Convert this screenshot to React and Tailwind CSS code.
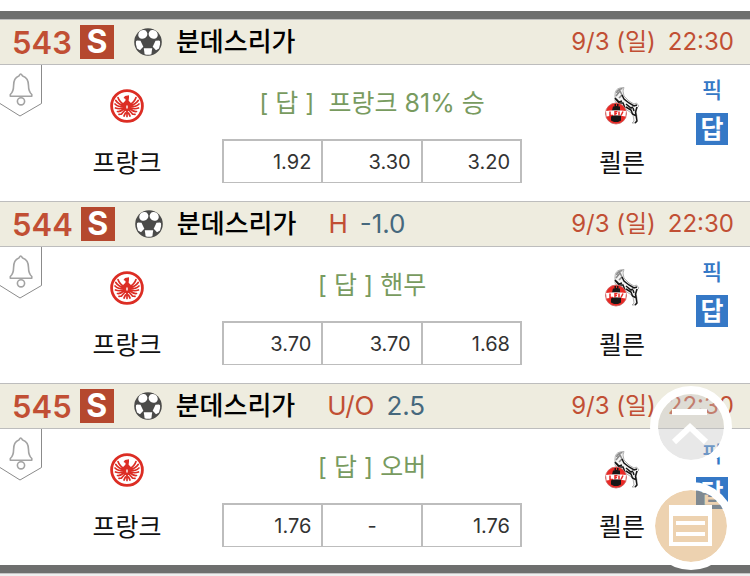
const matches = [
  { id: 543, answer: "[ 답 ]\u00a0 프랑크 81% 승", odds: ["1.92", "3.30", "3.20"] },
  {
    id: 544,
    mark: "H",
    line: "-1.0",
    answer: "[ 답 ] 핸무",
    odds: ["3.70", "3.70", "1.68"],
  },
  {
    id: 545,
    mark: "U/O",
    line: "2.5",
    answer: "[ 답 ] 오버",
    odds: ["1.76", "-", "1.76"],
  },
];

function SoccerBall() {
  return (
    <svg className="ml-5 size-7 shrink-0" viewBox="0 0 28 28" aria-hidden="true">
      <circle cx="14" cy="14" r="13.8" fill="#4b4b4a" />
      <g fill="#fff">
        <ellipse cx="8.8" cy="6.4" rx="4.7" ry="4.2" transform="rotate(-32 8.8 6.4)" />
        <ellipse cx="19.2" cy="6.4" rx="4.7" ry="4.2" transform="rotate(32 19.2 6.4)" />
        <path d="M3 12.5 6.500 12.800 9.300 18.800 6 22.200 3 20.500Q1.200 16 2 13.200Z" />
        <path d="M25 12.500l-3.500.3-2.800 6 3.300 3.400 3-1.700q1.800-4.500 1-7.300Z" />
        <path d="M9.800 20.200h8.400l-.8 6q-3.400 1-6.800 0Z" />
      </g>
      <path d="m14 8.600 5.600 4.200-2.100 6.400h-7l-2.100-6.400Z" fill="#4b4b4a" />
    </svg>
  );
}

function FrankfurtLogo() {
  return (
    <svg className="size-[34px]" viewBox="0 0 34 34" role="img" aria-label="프랑크">
      <circle cx="17" cy="17" r="15.400" fill="#fff" stroke="#dc2d24" strokeWidth="2.800" />
      <g fill="none" stroke="#dc2d24" strokeWidth="1.700" strokeLinecap="round">
        <path d="M15 16Q9.500 13.500 8 8.500M14 17Q8 15 5.800 11.500M14 18Q8 18 5 15M14 19Q9 20.500 5.500 19M14 20Q10 23 7.500 22.500" />
        <path d="M19 16Q24.500 13.500 26 8.500M20 17Q26 15 28.200 11.500M20 18Q26 18 29 15M20 19Q25 20.500 28.500 19M20 20Q24 23 26.500 22.500" />
        <path d="M15 21l-3.500 4M11.500 25l-2.500.3M19 21l3.500 4M22.500 25l2.500.3M17 20v7.500M15.500 24l-1.500 3M18.500 24l1.500 3" />
      </g>
      <path d="M17 11c2 1 4.500 2.500 4.500 5.500S19 22 17 23c-2-1-4.500-3.500-4.500-6.500S15 12 17 11Z" fill="#dc2d24" />
      <path d="M15 7l4-.8v2.500l-.5 3.500h-3V10l-2-1Z" fill="#dc2d24" />
      <path d="M16 16.500h2v3h-2Z" fill="#fff" fillOpacity=".7" />
    </svg>
  );
}

function KolnLogo() {
  return (
    <svg className="h-[38px] w-9" viewBox="0 0 36 38" role="img" aria-label="쾰른">
      <path
        d="M11 8Q11 2 16 1l4-.5-1 3.500 1 5 5 5 5 3 2.500-1 2.500 3-2 2-1 4 1 4-1 7h-4l2-2-1-6-3-3-5-3-6-3-4-5Z"
        fill="#f4f4f4"
        stroke="#a0a0a0"
        strokeWidth=".8"
      />
      <path
        d="M12.500 6q1-3.500 6-4.500M12 9l4-5 2 4-3 3"
        fill="none"
        stroke="#8a8a8a"
        strokeWidth="1.500"
      />
      <path
        d="M18 8l2 4 5 4 5 3 3-1M12 12l3 3 3-1M22 20l5 3 1.500 4 3 1.500M29 21l1 3M33 20l-1.500 5 1.500 9-2 2"
        fill="none"
        stroke="#161616"
        strokeWidth="1.500"
      />
      <path d="M22 17l5 4 2-1M11 11l4 5h4l2 5" fill="none" stroke="#161616" strokeWidth="1.500" />
      <circle cx="12" cy="26.500" r="10.500" fill="#ea2925" stroke="#c6615f" strokeWidth=".8" />
      <path d="M9 19.500h1.500V17H12v2h1v-2h1.500v2.500H16v4l1 1v9l-3 1.500h-4l-3-1.500v-9l1-1Z" fill="#171717" />
      <path d="M2 24q10-1.500 20 0l-.5 5.500q-9.500-2-19 0Z" fill="#fff" />
      <path
        d="M6 24.500v4h3M11 28.500v-4h2.500M11 26.500h2M15 24.500v4M17 28.500l2-4"
        fill="none"
        stroke="#ea2925"
        strokeWidth="1.500"
      />
      <path d="M8 29.500h9M8 32h8" stroke="#171717" strokeWidth="1.500" />
    </svg>
  );
}

function AlarmFlag() {
  return (
    <button type="button" aria-label="알림" className="block h-13 w-[42px] cursor-pointer">
      <svg className="size-full" viewBox="0 0 42 52" fill="none">
        <path d="M41.500 0v38.500L20 51 0 38.500" stroke="#8b8b8b" />
        <g stroke="#a3a3a3" strokeWidth="1.600" strokeLinejoin="round">
          <path d="M20.700 9c1.200 0 1.200 1.500 2 2 4.300 1.500 5.800 5 5.800 9.500 0 5 1 7 3.300 9V31.200H10.300V29.500c2.300-2 3.300-4 3.300-9 0-4.500 1.200-8 5.200-9.500.8-.5.700-2 1.900-2Z" />
          <circle cx="21" cy="36.300" r="3.600" />
        </g>
      </svg>
    </button>
  );
}

function Team({ name, children }) {
  return (
    <div className="flex flex-col items-center pt-[22px]">
      <div className="flex h-[38px] items-center">{children}</div>
      <span className="mt-[26px] text-[25px] text-[#111]">{name}</span>
    </div>
  );
}

function MatchRow({ match }) {
  return (
    <article>
      <header className="flex h-[46px] items-center border-y border-[#bdbdbd] bg-[#eeecdf] pr-4 pl-3">
        <span className="text-[31px] font-semibold text-[#c14f34]">{match.id}</span>
        <span className="ml-2 flex size-[34px] items-center justify-center bg-[#b5482e] text-[32px] font-bold text-white">
          S
        </span>
        <SoccerBall />
        <h2 className="ml-3.5 text-[26px] font-medium text-black">분데스리가</h2>
        {match.mark && (
          <p className="ml-8 flex gap-3 text-[26px] text-[#46687d]">
            <span className="text-[#c14f34]">{match.mark}</span>
            <span>{match.line}</span>
          </p>
        )}
        <time className="ml-auto flex gap-3 text-[24px] text-[#c14f34]">
          <span>9/3 (일)</span>
          <span>22:30</span>
        </time>
      </header>

      <div className="grid h-[136px] grid-cols-[42px_170px_1fr_180px_38px]">
        <AlarmFlag />
        <Team name="프랑크">
          <FrankfurtLogo />
        </Team>
        <div className="flex flex-col items-center pt-[26px]">
          <p className="text-[25px] text-[#789b5f]">{match.answer}</p>
          <table className="mt-[23px] h-11 w-[300px] table-fixed border-collapse text-[20px] text-[#333]">
            <tbody>
              <tr>
                {match.odds.map((odd, i) => (
                  <td
                    key={i}
                    className={`border-2 border-b border-[#bdbdbd] ${odd === "-" ? "text-center" : "pr-2.5 text-right"}`}
                  >
                    {odd}
                  </td>
                ))}
              </tr>
            </tbody>
          </table>
        </div>
        <Team name="쾰른">
          <KolnLogo />
        </Team>
        <div className="-ml-4 flex flex-col items-start gap-3 pt-3.5">
          <button type="button" className="w-8 cursor-pointer text-[22px] font-medium text-[#3578c6]">
            픽
          </button>
          <button
            type="button"
            className="flex size-8 cursor-pointer items-center justify-center bg-[#3578c6] text-[25px] font-bold text-white"
          >
            답
          </button>
        </div>
      </div>
    </article>
  );
}

export default function App() {
  return (
    <div className="min-h-screen bg-[#efefef] font-['Inter','Noto_Sans_CJK_KR',sans-serif] leading-none">
      <main className="border-b border-[#c4c4c4] bg-white pt-[11px]">
        <div className="border-y-8 border-[#6e6f6e]">
          {matches.map((match) => (
            <MatchRow key={match.id} match={match} />
          ))}
        </div>
      </main>

      <nav className="fixed right-[15px] bottom-1.5 flex flex-col items-center gap-3.5">
        <button
          type="button"
          aria-label="맨 위로"
          className="size-[82px] cursor-pointer rounded-full border-8 border-white bg-[#c5c5c5]/40 bg-clip-padding"
        >
          <svg className="size-full" viewBox="0 0 66 66" fill="none" stroke="#fff" strokeWidth="6">
            <path d="M14 18h35M16 48l16-15 16 15" />
          </svg>
        </button>
        <button
          type="button"
          aria-label="목록"
          className="size-[88px] cursor-pointer rounded-full border-8 border-white bg-[#d89d53]/46 bg-clip-padding"
        >
          <svg className="size-full" viewBox="0 0 72 72" fill="none" stroke="#fff">
            <path d="M14 15h43v41H14Z" fill="#fff" stroke="none" />
            <path d="M18 26h35v26H18Z" fill="#edd2b0" stroke="none" />
            <path d="M21 33h29M21 44h29" strokeWidth="4" />
          </svg>
        </button>
      </nav>
    </div>
  );
}
